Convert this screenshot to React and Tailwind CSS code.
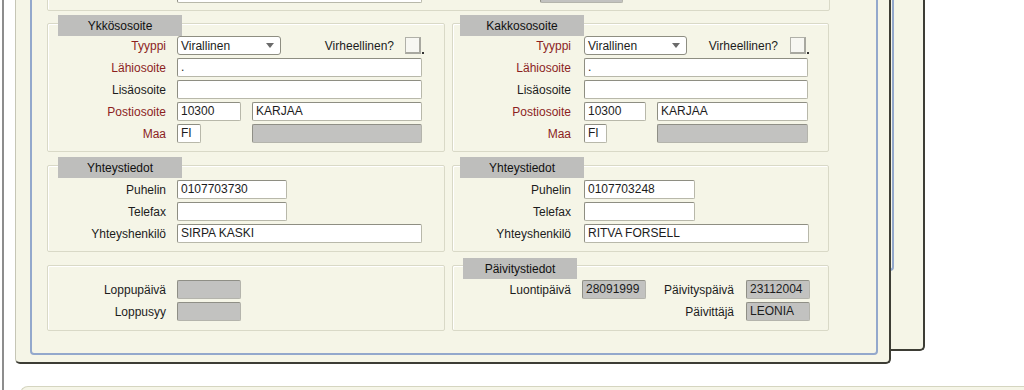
const RED = "text-[#8c1f1f]";
const INK = "text-[#1c1c1c]";

function Input({ w, value = "", gray = false, extra = "" }) {
  const skin = gray
    ? "bg-[#c2c2c0] border-[#b4b4ac] border-t-[#8f8f86] border-l-[#8f8f86]"
    : "bg-white border-[#b8b8aa] border-t-[#8e8e82] border-l-[#8e8e82]";
  return (
    <div className={`${w} ${extra} ${skin} h-[19px] shrink-0 overflow-hidden whitespace-nowrap rounded-[2px] border px-[3px] leading-[17px] ${INK}`}>
      {value}
    </div>
  );
}

function Select({ w, value }) {
  return (
    <div className={`${w} h-[19px] shrink-0 flex items-center justify-between rounded-[3px] border border-[#8e8e82] bg-white pl-[3px] pr-[6px] ${INK}`}>
      <span>{value}</span>
      <svg width="8" height="5" viewBox="0 0 8 5"><path d="M0 0h8L4 5z" fill="#6b6b6b" /></svg>
    </div>
  );
}

function Check() {
  return (
    <div className="flex items-end">
      <div className="h-[17px] w-[16px] border border-[#b0b0a8] border-r-2 border-b-2 border-r-[#a8a8a0] border-b-[#a8a8a0] bg-[#f7f7f2]" />
      <span className="ml-[1px] h-[2px] w-[2px] bg-[#333]" />
    </div>
  );
}

function Row({ label, red, gap = "ml-[11px]", children }) {
  return (
    <div className="flex h-[19px] items-center">
      <span className={`w-[118px] shrink-0 text-right ${red ? RED : INK}`}>{label}</span>
      <div className={`${gap} flex items-center`}>{children}</div>
    </div>
  );
}

function Box({ tab, tabCls = "ml-[10px] w-[124px]", children }) {
  return (
    <div className="flex flex-col rounded-[2px] border border-[#d9d9c7] shadow-[inset_1px_1px_0_#ffffff]">
      {tab && (
        <div className={`${tabCls} -mt-[9px] flex h-[21px] items-center justify-center bg-[#bebebc] text-[#111]`}>{tab}</div>
      )}
      {children}
    </div>
  );
}

function Address({ tab, tabCls, gap, sel, virhe, long, post, city, maa, grayW, maaGap, checkGap }) {
  return (
    <Box tab={tab} tabCls={tabCls}>
      <div className="flex flex-col gap-[3px] pb-[8px]">
        <Row label="Tyyppi" red gap={gap}>
          <Select w={sel} value="Virallinen" />
          <span className={`${virhe} text-right ${INK}`}>Virheellinen?</span>
          <div className={checkGap}><Check /></div>
        </Row>
        <Row label="Lähiosoite" red gap={gap}><Input w={long} value="." /></Row>
        <Row label="Lisäosoite" gap={gap}><Input w={long} /></Row>
        <Row label="Postiosoite" red gap={gap}>
          <Input w={post} value="10300" />
          <Input w={city} value="KARJAA" extra="ml-[11px]" />
        </Row>
        <Row label="Maa" red gap={gap}>
          <Input w={maa} value="FI" />
          <Input w={grayW} gray extra={maaGap} />
        </Row>
      </div>
    </Box>
  );
}

function Contact({ tabCls, gap, phone, name, phoneW, longW }) {
  return (
    <Box tab="Yhteystiedot" tabCls={tabCls}>
      <div className="mt-[2px] flex flex-col gap-[3px] pb-[8px]">
        <Row label="Puhelin" gap={gap}><Input w={phoneW} value={phone} /></Row>
        <Row label="Telefax" gap={gap}><Input w={phoneW} /></Row>
        <Row label="Yhteyshenkilö" gap={gap}><Input w={longW} value={name} /></Row>
      </div>
    </Box>
  );
}

export default function App() {
  return (
    <div className="h-[390px] w-[1024px] overflow-hidden bg-white font-['Liberation_Sans',Arial,sans-serif] text-[12px]">
      <div className="flow-root ml-[2px] h-full border-l-2 border-[#8d8d8d] pl-[11px]">
        <div className="relative -mt-[60px]">
          {/* window behind */}
          <div className="absolute left-0 top-0 h-[411px] w-[910px] rounded-br-[5px] border-r-2 border-b-2 border-[#3d3d35] bg-[#f5f5e7] pr-[29px] pb-[78px]">
            <div className="h-full w-full rounded-br-[4px] border-r-2 border-b-2 border-[#93a8cc]" />
          </div>

          {/* front window */}
          <div className="relative z-10 w-[876px] rounded-b-[5px] border-l border-r-2 border-b-2 border-l-[#c6c6b6] border-r-[#3d3d35] border-b-[#3d3d35] bg-[#f5f5e7] pl-[14px] pr-[11px] pb-[7px]">
            <div className="rounded-b-[4px] border-2 border-[#93a8cc] pl-[15px] pr-[46px] pb-[22px]">
              <div className="mt-[18px] flex h-[51px] items-end rounded-[2px] border border-[#d9d9c7] pb-[7px] pl-[129px] shadow-[inset_1px_1px_0_#ffffff]">
                <Input w="w-[245px]" />
                <Input w="w-[83px]" gray extra="ml-[118px]" />
              </div>

              <div className="mt-[12px] grid grid-cols-[398px_377px] gap-x-[7px]">
                <Address
                  tab="Ykkösosoite"
                  tabCls="ml-[10px] w-[124px]"
                  gap="ml-[11px]"
                  sel="w-[104px]"
                  virhe="w-[113px]"
                  checkGap="ml-[11px]"
                  long="w-[245px]"
                  post="w-[64px]"
                  city="w-[170px]"
                  maa="w-[24px]"
                  grayW="w-[170px]"
                  maaGap="ml-[51px]"
                />
                <Address
                  tab="Kakkososoite"
                  tabCls="ml-[7px] w-[124px]"
                  gap="ml-[13px]"
                  sel="w-[103px]"
                  virhe="w-[91px]"
                  checkGap="ml-[12px]"
                  long="w-[224px]"
                  post="w-[62px]"
                  city="w-[151px]"
                  maa="w-[23px]"
                  grayW="w-[151px]"
                  maaGap="ml-[50px]"
                />
              </div>

              <div className="mt-[13px] grid grid-cols-[398px_377px] gap-x-[7px]">
                <Contact tabCls="ml-[10px] w-[124px]" gap="ml-[11px]" phone="0107703730" name="SIRPA KASKI" phoneW="w-[110px]" longW="w-[245px]" />
                <Contact tabCls="ml-[7px] w-[124px]" gap="ml-[13px]" phone="0107703248" name="RITVA FORSELL" phoneW="w-[111px]" longW="w-[225px]" />
              </div>

              <div className="mt-[13px] grid grid-cols-[398px_377px] gap-x-[7px]">
                <Box>
                  <div className="flex flex-col gap-[3px] pt-[14px] pb-[9px]">
                    <Row label="Loppupäivä"><Input w="w-[64px]" gray /></Row>
                    <Row label="Loppusyy"><Input w="w-[64px]" gray /></Row>
                  </div>
                </Box>
                <Box tab="Päivitystiedot" tabCls="ml-[10px] w-[114px] !-mt-[8px]">
                  <div className="mt-[1px] flex flex-col gap-[3px]">
                    <Row label="Luontipäivä">
                      <Input w="w-[64px]" gray value="28091999" />
                      <span className={`w-[88px] text-right ${INK}`}>Päivityspäivä</span>
                      <Input w="w-[64px]" gray value="23112004" extra="ml-[12px]" />
                    </Row>
                    <div className="flex h-[19px] items-center">
                      <span className={`ml-[193px] w-[88px] text-right ${INK}`}>Päivittäjä</span>
                      <Input w="w-[64px]" gray value="LEONIA" extra="ml-[12px]" />
                    </div>
                  </div>
                </Box>
              </div>
            </div>
          </div>
        </div>

        <div className="ml-[5px] mt-[22px] h-[20px] rounded-tl-[8px] border-t border-l border-[#d5d5c0] bg-[#f5f5e7]" />
      </div>
    </div>
  );
}
